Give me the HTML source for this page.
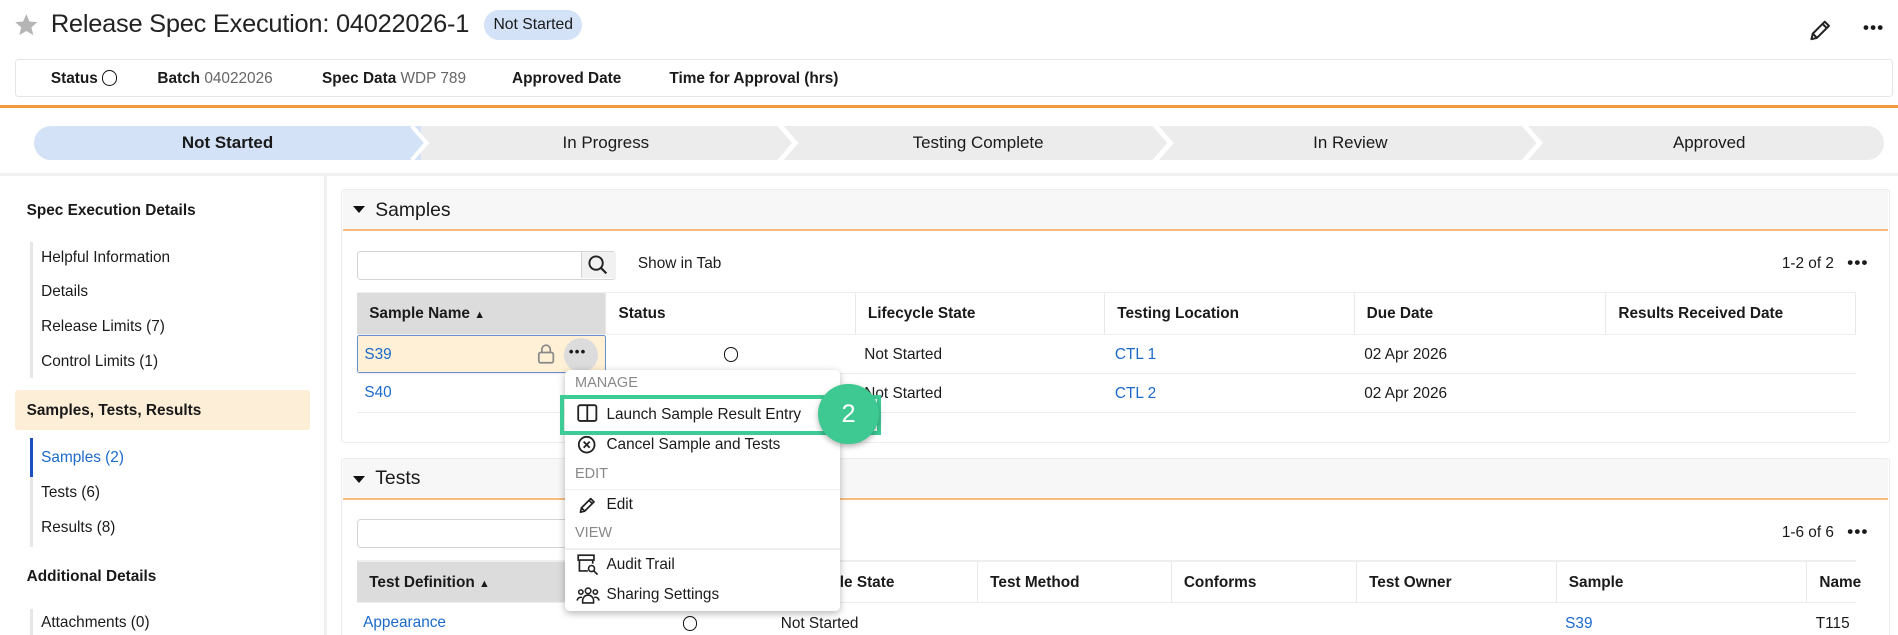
<!DOCTYPE html>
<html><head><meta charset="utf-8">
<style>
html,body{margin:0;padding:0;background:#fff;width:1898px;height:635px;overflow:hidden}
#w{zoom:1.2105;position:relative;width:1568px;height:525px;font-family:"Liberation Sans",Arial,sans-serif;color:#1a1a1a;font-size:12.7px}
.a{position:absolute;white-space:nowrap}
.b{font-weight:bold}
.g{color:#666}
.lk{color:#1b6ac9}
.seg{position:absolute;top:104px;height:28px;line-height:28px;text-align:center;font-size:14px;background:#ececec}
.th{position:absolute;height:34px;line-height:34px;font-weight:bold;padding-left:10px;box-sizing:border-box;border-right:1px solid #e8e8e8}
.circ{position:absolute;width:12px;height:12px;border:1.6px solid #111;border-radius:50%;box-sizing:border-box}
.dots{position:absolute;font-weight:bold;letter-spacing:1px;font-size:14px}
.mi{position:absolute;left:501px;font-size:12.7px}
.mh{position:absolute;left:475px;font-size:12px;color:#888}
</style></head><body><div id="w">
<svg class="a" style="left:11px;top:10px" width="22" height="21" viewBox="0 0 24 24"><path d="M12 2l3 7 7.5.6-5.7 4.9 1.8 7.4L12 18l-6.6 3.9 1.8-7.4L1.5 9.6 9 9z" fill="#b5b5b5"/></svg>
<div class="a" style="left:42px;top:8px;font-size:21px;letter-spacing:-0.2px;color:#222">Release Spec Execution: 04022026-1</div>
<div class="a" style="left:400px;top:8px;width:81px;height:25px;border-radius:13px;background:#d3e2f7;font-size:13px;line-height:25px;text-align:center">Not Started</div>
<svg class="a" style="left:1493px;top:14px" width="22" height="22" viewBox="0 0 24 24"><path d="M4 20l1.2-5L16 4.2l3.8 3.8L9 18.8z M14 6.2l3.8 3.8 M5.2 15l3.8 3.8" fill="none" stroke="#222" stroke-width="1.8" stroke-linejoin="round"/></svg>
<div class="dots" style="left:1539px;top:15px">•••</div>
<div class="a" style="left:12px;top:49px;width:1552px;height:31px;border:1px solid #e6e6e6;border-radius:3px;box-sizing:border-box"></div>
<div class="a" style="left:42px;top:58px"><span class="b">Status</span></div>
<div class="circ" style="left:84px;top:58px;width:13px;height:13px"></div>
<div class="a" style="left:130px;top:58px"><span class="b">Batch</span> <span class="g">04022026</span></div>
<div class="a" style="left:266px;top:58px"><span class="b">Spec Data</span> <span class="g">WDP 789</span></div>
<div class="a b" style="left:423px;top:58px">Approved Date</div>
<div class="a b" style="left:553px;top:58px">Time for Approval (hrs)</div>
<div class="a" style="left:0;top:87px;width:1568px;height:2px;background:#f39a3c"></div>
<div class="seg b" style="left:28px;width:320px;background:#d3e2f7;border-radius:14px 0 0 14px">Not Started</div>
<div class="seg" style="left:348px;width:305px">In Progress</div>
<div class="seg" style="left:653px;width:310px">Testing Complete</div>
<div class="seg" style="left:963px;width:305px">In Review</div>
<div class="seg" style="left:1268px;width:288px;border-radius:0 14px 14px 0">Approved</div>
<svg class="a" style="left:0;top:104px" width="1568" height="28">
<g fill="none" stroke="#fff" stroke-width="4"><path d="M338 -2L352 14L338 30"/><path d="M643 -2L657 14L643 30"/><path d="M953 -2L967 14L953 30"/><path d="M1258 -2L1272 14L1258 30"/></g>
<path d="M338 -2L352 14L338 30L330 30L330 -2z" fill="#d3e2f7"/><path d="M340 0L352 14L340 28" fill="none" stroke="#fff" stroke-width="3"/>
</svg>
<div class="a" style="left:0;top:143px;width:1568px;height:2px;background:#f1f1f1"></div>
<div class="a" style="left:268px;top:145px;width:2px;height:380px;background:#f1f1f1"></div>
<div class="a b" style="left:22px;top:167px">Spec Execution Details</div>
<div class="a" style="left:25px;top:200px;width:2px;height:112px;background:#e6e6e6"></div>
<div class="a" style="left:34px;top:206px">Helpful Information</div>
<div class="a" style="left:34px;top:234px">Details</div>
<div class="a" style="left:34px;top:263px">Release Limits (7)</div>
<div class="a" style="left:34px;top:292px">Control Limits (1)</div>
<div class="a" style="left:12px;top:322px;width:244px;height:33px;background:#fdeed7;border-radius:2px"></div>
<div class="a b" style="left:22px;top:332px">Samples, Tests, Results</div>
<div class="a" style="left:25px;top:362px;width:2px;height:90px;background:#e6e6e6"></div>
<div class="a" style="left:25px;top:362px;width:2px;height:32px;background:#1d4ebd"></div>
<div class="a lk" style="left:34px;top:371px">Samples (2)</div>
<div class="a" style="left:34px;top:400px">Tests (6)</div>
<div class="a" style="left:34px;top:429px">Results (8)</div>
<div class="a b" style="left:22px;top:469px">Additional Details</div>
<div class="a" style="left:25px;top:503px;width:2px;height:22px;background:#e6e6e6"></div>
<div class="a" style="left:34px;top:507px">Attachments (0)</div>
<div class="a" style="left:282px;top:156px;width:1279px;height:210px;border:1px solid #ececec;border-radius:3px;box-sizing:border-box"></div>
<div class="a" style="left:283px;top:157px;width:1277px;height:32px;background:#f7f7f7;border-bottom:2px solid #f8bd7c"></div>
<div class="a" style="left:292px;top:170px;width:0;height:0;border-left:5px solid transparent;border-right:5px solid transparent;border-top:6px solid #111"></div>
<div class="a" style="left:310px;top:164px;font-size:16px">Samples</div>
<div class="a" style="left:295px;top:207px;width:214px;height:24px;border:1px solid #d4d4d4;border-radius:3px;box-sizing:border-box"></div>
<div class="a" style="left:480px;top:208px;width:28px;height:22px;background:#f1f1f1;border-left:1px solid #d4d4d4"></div>
<svg class="a" style="left:485px;top:210px" width="18" height="18" viewBox="0 0 18 18"><circle cx="7.5" cy="7.5" r="5.5" fill="none" stroke="#222" stroke-width="1.6"/><path d="M11.5 11.5l4.5 4.5" stroke="#222" stroke-width="1.8"/></svg>
<div class="a" style="left:527px;top:211px">Show in Tab</div>
<div class="a" style="left:1472px;top:211px">1-2 of 2</div>
<div class="dots" style="left:1526px;top:209px">•••</div>
<div class="a" style="left:295px;top:241px;width:1238px;height:1px;background:#eee"></div>
<div class="th" style="left:295px;top:242px;width:206px;background:#dcdcdc">Sample Name <span style="font-size:9px">▲</span></div>
<div class="th" style="left:501px;top:242px;width:206px">Status</div>
<div class="th" style="left:707px;top:242px;width:206px">Lifecycle State</div>
<div class="th" style="left:913px;top:242px;width:206px">Testing Location</div>
<div class="th" style="left:1119px;top:242px;width:208px">Due Date</div>
<div class="th" style="left:1327px;top:242px;width:206px">Results Received Date</div>
<div class="a" style="left:295px;top:276px;width:1238px;height:1px;background:#eee"></div>
<div class="a" style="left:295px;top:277px;width:206px;height:31px;background:#fff0d6;border:1.5px solid #6a8fd0;box-sizing:border-box;border-radius:2px"></div>
<div class="a lk" style="left:301px;top:286px">S39</div>
<svg class="a" style="left:444px;top:284px" width="15" height="17" viewBox="0 0 15 17"><rect x="1.5" y="7" width="12" height="8.5" rx="1.5" fill="none" stroke="#888" stroke-width="1.4"/><path d="M4 7V4.5a3.5 3.5 0 017 0V7" fill="none" stroke="#888" stroke-width="1.4"/></svg>
<div class="a" style="left:466px;top:279px;width:28px;height:28px;border-radius:50%;background:#dcdcdc"></div>
<div class="dots" style="left:470px;top:284px;font-size:11px">•••</div>
<div class="circ" style="left:598px;top:287px"></div>
<div class="a" style="left:714px;top:286px">Not Started</div>
<div class="a lk" style="left:921px;top:286px">CTL 1</div>
<div class="a" style="left:1127px;top:286px">02 Apr 2026</div>
<div class="a" style="left:295px;top:308px;width:1238px;height:1px;background:#eee"></div>
<div class="a lk" style="left:301px;top:317px">S40</div>
<div class="a" style="left:714px;top:318px">Not Started</div>
<div class="a lk" style="left:921px;top:318px">CTL 2</div>
<div class="a" style="left:1127px;top:318px">02 Apr 2026</div>
<div class="a" style="left:295px;top:340px;width:1238px;height:1px;background:#eee"></div>
<div class="a" style="left:282px;top:378px;width:1279px;height:160px;border:1px solid #ececec;border-radius:3px;box-sizing:border-box"></div>
<div class="a" style="left:283px;top:379px;width:1277px;height:32px;background:#f7f7f7;border-bottom:2px solid #f8bd7c"></div>
<div class="a" style="left:292px;top:393px;width:0;height:0;border-left:5px solid transparent;border-right:5px solid transparent;border-top:6px solid #111"></div>
<div class="a" style="left:310px;top:386px;font-size:16px">Tests</div>
<div class="a" style="left:295px;top:429px;width:214px;height:24px;border:1px solid #d4d4d4;border-radius:3px;box-sizing:border-box"></div>
<div class="a" style="left:1472px;top:433px">1-6 of 6</div>
<div class="dots" style="left:1526px;top:431px">•••</div>
<div class="a" style="left:295px;top:463px;width:1238px;height:1px;background:#eee"></div>
<div class="th" style="left:295px;top:464px;width:255px;background:#dcdcdc">Test Definition <span style="font-size:9px">▲</span></div>
<div class="th" style="left:550px;top:464px;width:90px"></div>
<div class="th" style="left:640px;top:464px;width:168px">Lifecycle State</div>
<div class="th" style="left:808px;top:464px;width:160px">Test Method</div>
<div class="th" style="left:968px;top:464px;width:153px">Conforms</div>
<div class="th" style="left:1121px;top:464px;width:165px">Test Owner</div>
<div class="th" style="left:1286px;top:464px;width:207px">Sample</div>
<div class="th" style="left:1493px;top:464px;width:60px;border-right:none">Name</div>
<div class="a" style="left:295px;top:497px;width:1238px;height:1px;background:#eee"></div>
<div class="a lk" style="left:300px;top:507px">Appearance</div>
<div class="circ" style="left:564px;top:509px"></div>
<div class="a" style="left:645px;top:508px">Not Started</div>
<div class="a lk" style="left:1293px;top:508px">S39</div>
<div class="a" style="left:1500px;top:508px">T115</div>
<div class="a" style="left:467px;top:306px;width:227px;height:199px;background:#fff;border-radius:4px;box-shadow:0 2px 6px rgba(0,0,0,.28)"></div>
<div class="mh" style="top:310px">MANAGE</div>
<div class="a" style="left:467px;top:327px;width:227px;height:1px;background:#eee"></div>
<svg class="a" style="left:477px;top:334px" width="17" height="15" viewBox="0 0 17 15"><rect x="1" y="1" width="15" height="13" rx="1.5" fill="none" stroke="#222" stroke-width="1.5"/><path d="M8.5 1v13" stroke="#222" stroke-width="1.5"/></svg>
<div class="mi" style="top:335px">Launch Sample Result Entry</div>
<svg class="a" style="left:477px;top:359px" width="16" height="16" viewBox="0 0 16 16"><circle cx="8" cy="8" r="6.5" fill="none" stroke="#222" stroke-width="1.5"/><path d="M5.5 5.5l5 5M10.5 5.5l-5 5" stroke="#222" stroke-width="1.5"/></svg>
<div class="mi" style="top:360px">Cancel Sample and Tests</div>
<div class="mh" style="top:385px">EDIT</div>
<div class="a" style="left:467px;top:404px;width:227px;height:1px;background:#eee"></div>
<svg class="a" style="left:477px;top:409px" width="17" height="17" viewBox="0 0 24 24"><path d="M4 20l1.2-5L16 4.2l3.8 3.8L9 18.8z M14 6.2l3.8 3.8 M5.2 15l3.8 3.8" fill="none" stroke="#222" stroke-width="2" stroke-linejoin="round"/></svg>
<div class="mi" style="top:410px">Edit</div>
<div class="mh" style="top:434px">VIEW</div>
<div class="a" style="left:467px;top:453px;width:227px;height:1px;background:#eee"></div>
<svg class="a" style="left:477px;top:458px" width="18" height="17" viewBox="0 0 18 17"><rect x="1" y="1" width="13" height="4" fill="none" stroke="#222" stroke-width="1.4"/><path d="M2 5v9h7M13 5v3" fill="none" stroke="#222" stroke-width="1.4"/><circle cx="12" cy="12" r="2.5" fill="none" stroke="#222" stroke-width="1.3"/><path d="M14 14l3 3" stroke="#222" stroke-width="1.4"/></svg>
<div class="mi" style="top:459px">Audit Trail</div>
<svg class="a" style="left:476px;top:484px" width="20" height="15" viewBox="0 0 20 15"><g fill="none" stroke="#222" stroke-width="1.3"><circle cx="10" cy="4" r="2.3"/><circle cx="4" cy="5" r="1.8"/><circle cx="16" cy="5" r="1.8"/><path d="M5.5 14v-2a4.5 4.5 0 019 0v2zM1 12a3 3 0 014-2.5M19 12a3 3 0 00-4-2.5"/></g></svg>
<div class="mi" style="top:484px">Sharing Settings</div>
<div class="a" style="left:463px;top:326px;width:265px;height:33px;border:4px solid #3dcc96;box-sizing:border-box"></div>
<div class="a" style="left:676px;top:317px;width:50px;height:50px;border-radius:50%;background:#3ec993;box-shadow:0 2px 5px rgba(0,0,0,.3);color:#fff;font-size:21px;line-height:50px;text-align:center">2</div>
</div></body></html>
